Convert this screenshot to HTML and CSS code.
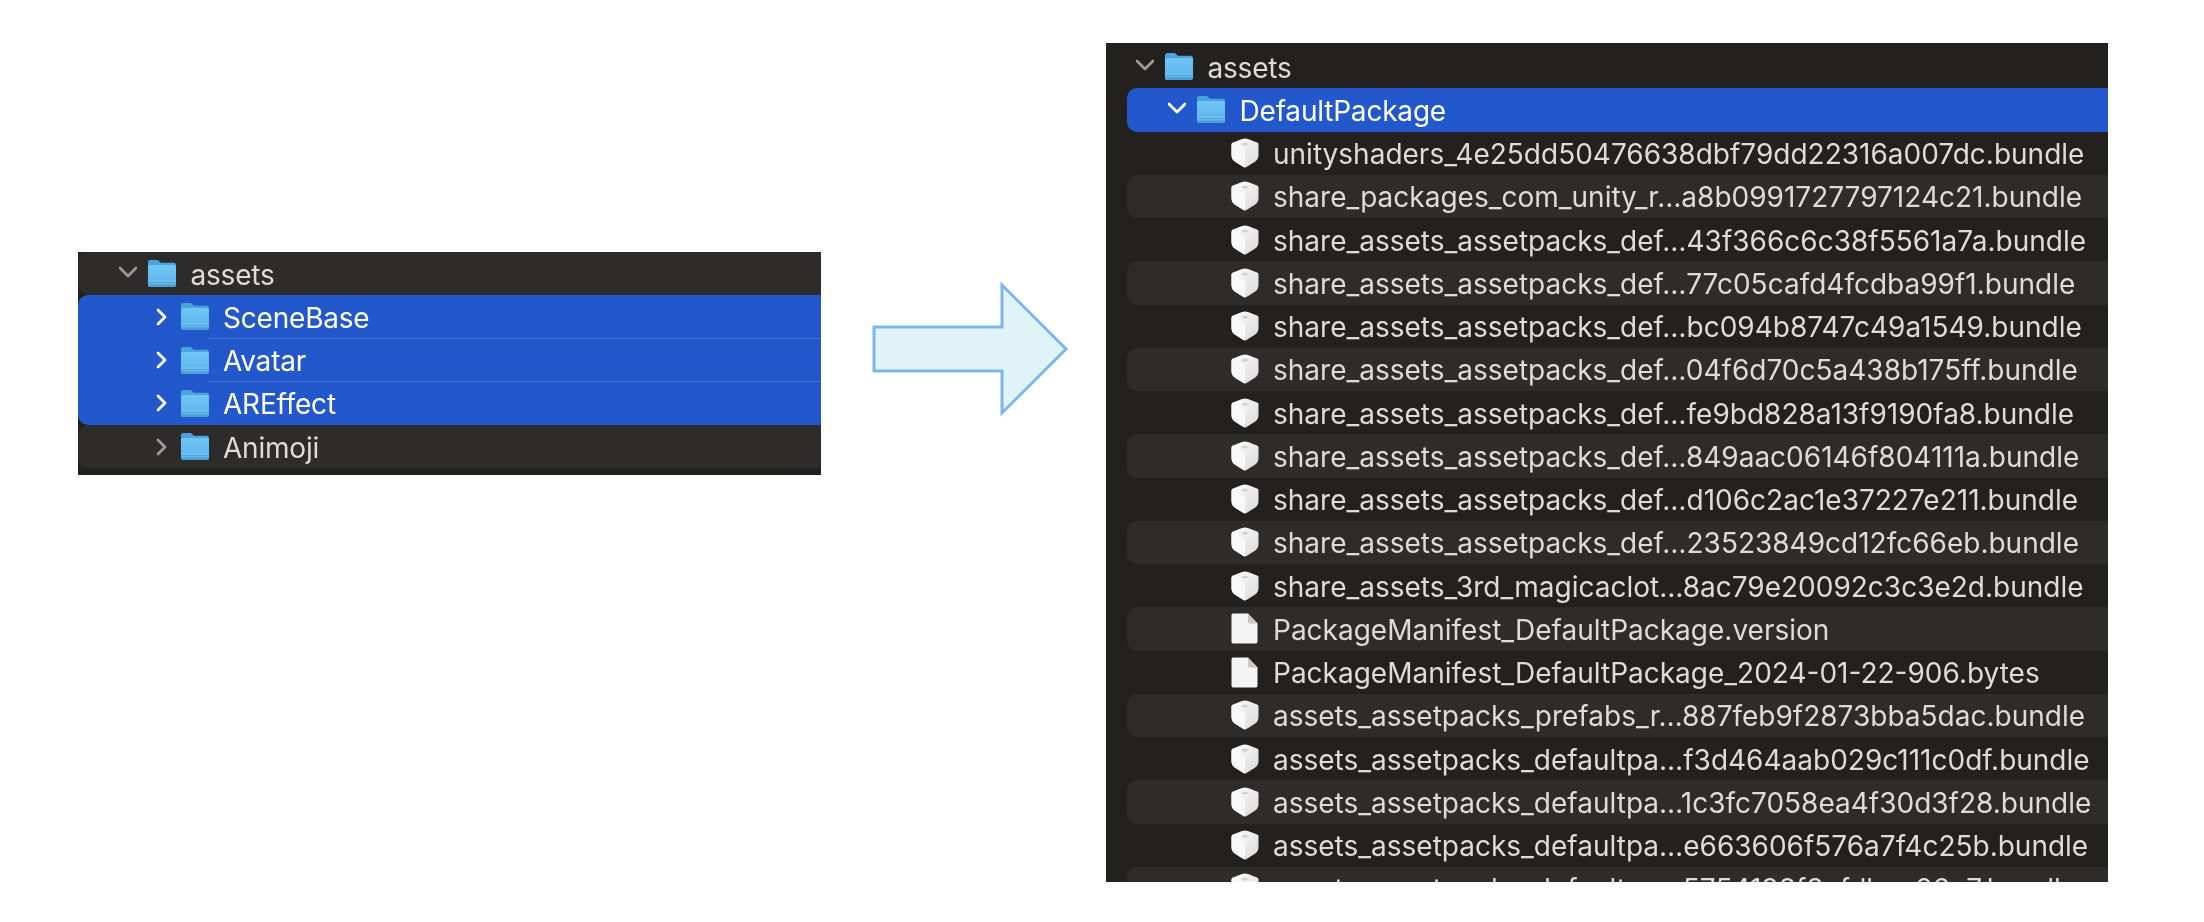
FILE: index.html
```html
<!DOCTYPE html>
<html>
	<head>
		<meta charset="UTF-8">
		<title>assets</title>
		<link rel="stylesheet" href="styles.css">
	</head>
	<body>
		<svg class="defs" width="0" height="0">
			<defs>
				<linearGradient id="folder_body" x1="0" y1="0" x2="0" y2="1">
					<stop offset="0" stop-color="#70c6f6"/>
					<stop offset="1" stop-color="#58b2ea"/>
				</linearGradient>
				<linearGradient id="box_side" x1="0" y1="0" x2="1" y2="1">
					<stop offset="0" stop-color="#ffffff"/>
					<stop offset="1" stop-color="#d8d8d8"/>
				</linearGradient>
				<symbol id="folder" viewBox="0 0 31 30">
					<path d="M1 3.5C1 1.800 2 1 3.500 1H10c1.200 0 1.800.4 2.600 1.200L14.400 4H27.500C29.200 4 30 5 30 6.500V26.500C30 28.200 29 29 27.500 29H3.500C1.800 29 1 28 1 26.500Z" fill="#4ba3de"/>
					<path d="M1 8.500C1 7 2 6.200 3.500 6.200H27.500C29 6.200 30 7 30 8.500V26.500C30 28.200 29 29 27.500 29H3.500C1.800 29 1 28 1 26.500Z" fill="url(#folder_body)"/>
					<path d="M1 24H30V26.500C30 28.200 29 29 27.500 29H3.500C1.800 29 1 28 1 26.500Z" fill="#4a9fd9"/>
					<path d="M1 22.800H30M1 25.600H30" stroke="#84cdf4" stroke-width=".8" fill="none"/>
				</symbol>
				<symbol id="box" viewBox="0 0 30 30">
					<path d="M15 .5C16 .5 17 .8 18 1.100L27 4.500C28 4.900 28.500 5.500 28.500 6.500V17C28.500 20.500 27 22.500 24.500 24L16.500 29C15.500 29.600 14.500 29.600 13.500 29L5.500 24C3 22.500 1.500 20.500 1.500 17V6.500C1.500 5.500 2 4.900 3 4.500L12 1.100C13 .8 14 .5 15 .5Z" fill="url(#box_side)"/>
					<path d="M11 6 15 4.500 19 6 15 8Z" fill="#cfcfcf"/>
					<path d="M15 12V29.400C14.500 29.400 14 29.300 13.500 29L5.500 24C3 22.500 1.500 20.500 1.500 17V6.500Z" fill="#f8f8f8"/>
				</symbol>
				<symbol id="doc" viewBox="0 0 27 31">
					<path d="M2.500 .5H17L26.500 10.500V28.500C26.500 30 25.500 30.500 24.500 30.500H2.500C1.500 30.500 .5 30 .5 28.500V2.500C.5 1 1.500 .5 2.500 .5Z" fill="#f4f4f4"/>
					<path d="M17 .5 26.500 10.500H19C17.500 10.500 17 10 17 8.500Z" fill="#c8c8c8"/>
				</symbol>
			</defs>
		</svg>
		<div class="stage">
			<div class="panel panel_small">
				<div class="row row_odd depth_0">
					<svg class="chevron down"><polyline points="1,3 9,11 17,3"/></svg>
					<svg class="icon folder"><use href="#folder"/></svg>
					<span class="name">assets</span>
				</div>
				<div class="selection">
					<div class="row depth_1 sep">
						<svg class="chevron right"><polyline points="3,2 10,9 3,16"/></svg>
						<svg class="icon folder"><use href="#folder"/></svg>
						<span class="name">SceneBase</span>
					</div>
					<div class="row depth_1 sep">
						<svg class="chevron right"><polyline points="3,2 10,9 3,16"/></svg>
						<svg class="icon folder"><use href="#folder"/></svg>
						<span class="name">Avatar</span>
					</div>
					<div class="row depth_1">
						<svg class="chevron right"><polyline points="3,2 10,9 3,16"/></svg>
						<svg class="icon folder"><use href="#folder"/></svg>
						<span class="name">AREffect</span>
					</div>
				</div>
				<div class="row row_odd depth_1">
					<svg class="chevron right dim"><polyline points="3,2 10,9 3,16"/></svg>
					<svg class="icon folder"><use href="#folder"/></svg>
					<span class="name">Animoji</span>
				</div>
			</div>
			<svg class="arrow" width="200" height="140" viewBox="0 0 200 140">
				<polygon points="5,48 133,48 133,6 197,70 133,134 133,92 5,92"/>
			</svg>
			<div class="panel panel_big">
				<div class="row depth_0">
					<svg class="chevron down"><polyline points="1,3 9,11 17,3"/></svg>
					<svg class="icon folder"><use href="#folder"/></svg>
					<span class="name">assets</span>
				</div>
				<div class="row row_selected depth_1">
					<svg class="chevron down"><polyline points="1,3 9,11 17,3"/></svg>
					<svg class="icon folder"><use href="#folder"/></svg>
					<span class="name">DefaultPackage</span>
				</div>
				<div class="row file"><svg class="icon box"><use href="#box"/></svg><span class="name">unityshaders_4e25dd50476638dbf79dd22316a007dc.bundle</span></div>
				<div class="row file row_odd"><svg class="icon box"><use href="#box"/></svg><span class="name">share_packages_com_unity_r…a8b0991727797124c21.bundle</span></div>
				<div class="row file"><svg class="icon box"><use href="#box"/></svg><span class="name">share_assets_assetpacks_def…43f366c6c38f5561a7a.bundle</span></div>
				<div class="row file row_odd"><svg class="icon box"><use href="#box"/></svg><span class="name">share_assets_assetpacks_def…77c05cafd4fcdba99f1.bundle</span></div>
				<div class="row file"><svg class="icon box"><use href="#box"/></svg><span class="name">share_assets_assetpacks_def…bc094b8747c49a1549.bundle</span></div>
				<div class="row file row_odd"><svg class="icon box"><use href="#box"/></svg><span class="name">share_assets_assetpacks_def…04f6d70c5a438b175ff.bundle</span></div>
				<div class="row file"><svg class="icon box"><use href="#box"/></svg><span class="name">share_assets_assetpacks_def…fe9bd828a13f9190fa8.bundle</span></div>
				<div class="row file row_odd"><svg class="icon box"><use href="#box"/></svg><span class="name">share_assets_assetpacks_def…849aac06146f804111a.bundle</span></div>
				<div class="row file"><svg class="icon box"><use href="#box"/></svg><span class="name">share_assets_assetpacks_def…d106c2ac1e37227e211.bundle</span></div>
				<div class="row file row_odd"><svg class="icon box"><use href="#box"/></svg><span class="name">share_assets_assetpacks_def…23523849cd12fc66eb.bundle</span></div>
				<div class="row file"><svg class="icon box"><use href="#box"/></svg><span class="name">share_assets_3rd_magicaclot…8ac79e20092c3c3e2d.bundle</span></div>
				<div class="row file row_odd"><svg class="icon doc"><use href="#doc"/></svg><span class="name">PackageManifest_DefaultPackage.version</span></div>
				<div class="row file"><svg class="icon doc"><use href="#doc"/></svg><span class="name">PackageManifest_DefaultPackage_2024-01-22-906.bytes</span></div>
				<div class="row file row_odd"><svg class="icon box"><use href="#box"/></svg><span class="name">assets_assetpacks_prefabs_r…887feb9f2873bba5dac.bundle</span></div>
				<div class="row file"><svg class="icon box"><use href="#box"/></svg><span class="name">assets_assetpacks_defaultpa…f3d464aab029c111c0df.bundle</span></div>
				<div class="row file row_odd"><svg class="icon box"><use href="#box"/></svg><span class="name">assets_assetpacks_defaultpa…1c3fc7058ea4f30d3f28.bundle</span></div>
				<div class="row file"><svg class="icon box"><use href="#box"/></svg><span class="name">assets_assetpacks_defaultpa…e663606f576a7f4c25b.bundle</span></div>
				<div class="row file row_odd"><svg class="icon box"><use href="#box"/></svg><span class="name">assets_assetpacks_defaultpa…5754188f3cfdbca26e7.bundle</span></div>
			</div>
		</div>
	</body>
</html>
```

FILE: styles.css
```css
*{
	padding: 0;
	margin: 0;
	box-sizing: border-box;
}
body{
	background: #ffffff;
	font-family: Inter, "Liberation Sans", sans-serif;
	overflow: hidden;
}
.defs{
	display: block;
	height: 0;
}
.stage{
	display: flex;
	align-items: flex-start;
	padding-left: 78px;
}
.panel{
	background: #222120;
	overflow: hidden;
	color: #dcdcda;
	font-size: 28px;
	filter: blur(.4px);
}
.panel_small{
	width: 743px;
	height: 223px;
	margin-top: 252px;
}
.panel_big{
	width: 1002px;
	height: 839px;
	margin-top: 43px;
	margin-left: 37px;
	padding: 2px 0 0 21px;
}
.arrow{
	flex: none;
	margin-top: 279px;
	margin-left: 48px;
	fill: #e0f3f7;
	stroke: #7cb5ee;
	stroke-width: 3;
}
.row{
	display: flex;
	align-items: center;
	height: 43.25px;
	white-space: nowrap;
}
.row_odd{
	background: #2d2c2b;
	border-radius: 10px 0 0 10px;
}
.row_selected{
	background: #2357cc;
	color: #ffffff;
	border-radius: 10px 0 0 10px;
}
.selection{
	background: #2357cc;
	color: #ffffff;
	border-radius: 10px 0 0 10px;
}
.sep{
	position: relative;
}
.sep::after{
	content: "";
	position: absolute;
	left: 130px;
	right: 0;
	bottom: 0;
	height: 1px;
	background: #4270d8;
}
.name{
	padding-top: 2px;
}
.depth_0 .name,
.depth_1 .name{
	letter-spacing: -.2px;
}
.depth_0{
	padding-left: 41px;
}
.depth_1{
	padding-left: 77px;
}
.panel_big .depth_0{
	padding-left: 9px;
}
.panel_big .depth_1{
	padding-left: 41px;
}
.file{
	padding-left: 103px;
}
.chevron{
	flex: none;
	width: 18px;
	height: 18px;
	fill: none;
	stroke: #ffffff;
	stroke-width: 2.8;
	stroke-linecap: round;
	stroke-linejoin: round;
}
.chevron.down{
	margin-right: 10px;
}
.chevron.right{
	width: 14px;
	margin-right: 10.5px;
}
.depth_0 .chevron{
	stroke: #9a9a98;
}
.dim.chevron{
	stroke: #9a9a98;
}
.icon{
	flex: none;
}
.folder{
	width: 30px;
	height: 29px;
	margin-right: 13.5px;
}
.box{
	width: 30px;
	height: 30px;
	margin-right: 13px;
}
.doc{
	width: 27px;
	height: 31px;
	margin-left: 1px;
	margin-right: 15px;
}
```
